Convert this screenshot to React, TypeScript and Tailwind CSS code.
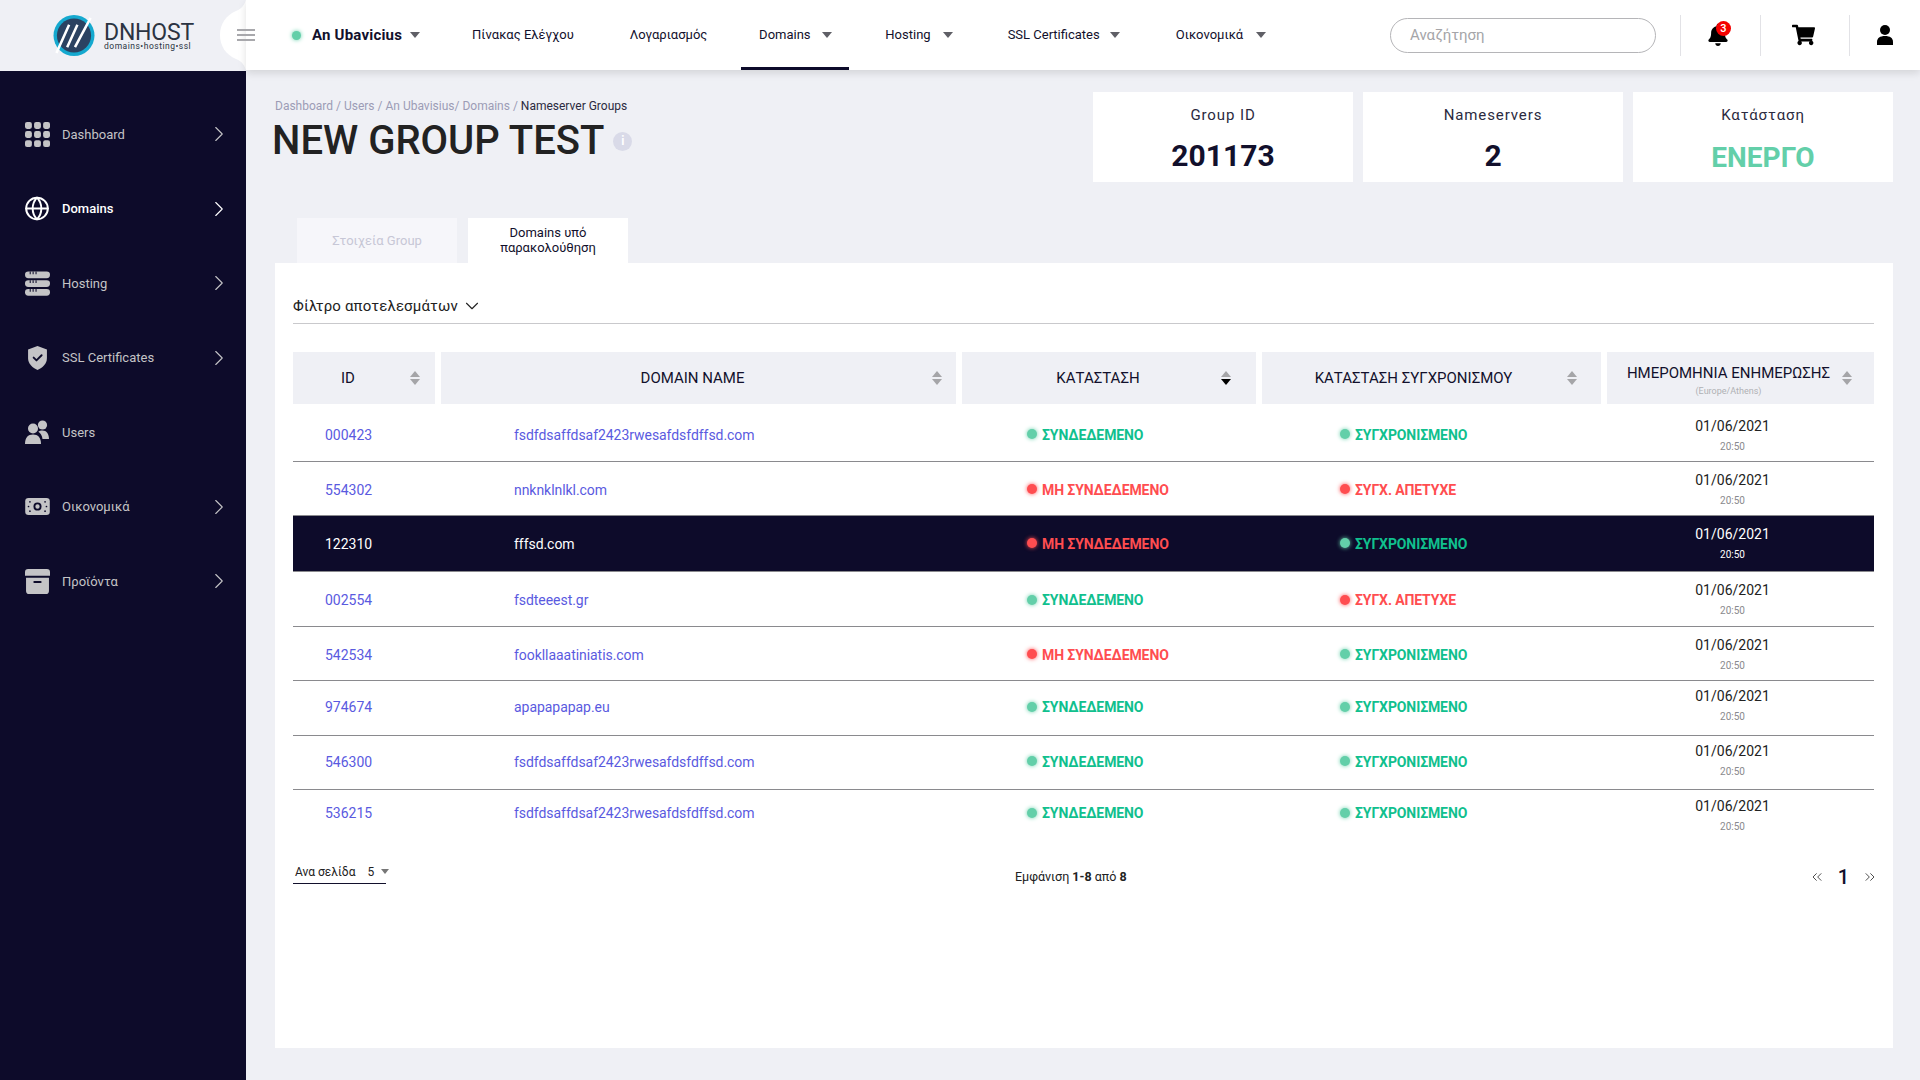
import React from 'react';
import { ChevronRight, ChevronDown, Globe, ChevronsLeft, ChevronsRight } from 'lucide-react';
import { FaBell, FaShoppingCart } from 'react-icons/fa';

const font = { fontFamily: 'Roboto, sans-serif' };

const Caret = ({ className = 'border-x-[5px] border-t-[6px] border-t-[#5f5f66]' }: { className?: string }) => (
  <span className={`inline-block w-0 h-0 shrink-0 border-x-transparent ${className}`} />
);

const Dashboard = () => (
  <svg viewBox="0 0 24 24" className="w-[25px] h-[25px]" fill="#c4c4c6">
    {[0, 8.7, 17.4].flatMap(y => [0, 8.7, 17.4].map(x => <rect key={`${x}-${y}`} x={x} y={y} width="6.6" height="6.6" rx="2" />))}
  </svg>
);

const Server = () => (
  <svg viewBox="0 0 24 24" className="w-[25px] h-[25px]" fill="#c4c4c6">
    {[0.5, 8.9, 17.3].map(y => (
      <g key={y}>
        <rect x="0" y={y} width="24" height="6.4" rx="3.2" />
        <path d={`M5 ${y}v2.600M7.800 ${y}v2.600M10.600 ${y}v2.600`} stroke="#0d0b2a" strokeWidth="1" />
      </g>
    ))}
  </svg>
);

const Shield = () => (
  <svg viewBox="0 0 24 28" className="w-[21px] h-[24px]">
    <path d="M12 0 23 4v10c0 7-5 11-11 14C6 25 1 21 1 14V4z" fill="#c4c4c6" />
    <path d="m7.500 13.500 3.300 3.300 6-6" fill="none" stroke="#0d0b2a" strokeWidth="2.200" strokeLinecap="round" strokeLinejoin="round" />
  </svg>
);

const UsersIcon = () => (
  <svg viewBox="0 0 24 24" className="w-[24px] h-[24px]" fill="#c4c4c6">
    <circle cx="17.500" cy="5" r="4.600" />
    <path d="M24 19h-6.500c-.3-3.300-1.800-5.700-4.200-7.200 1-.9 2.400-1.400 4.200-1.400 3.900 0 6.500 3 6.500 8.600z" />
    <circle cx="8" cy="8.500" r="5" />
    <path d="M0 24c0-6.500 3-9.500 8-9.500s8 3 8 9.500z" />
  </svg>
);

const Money = () => (
  <svg viewBox="0 0 26 18" className="w-[25px] h-[17px]">
    <rect width="26" height="18" rx="3.500" fill="#c4c4c6" />
    <circle cx="13" cy="9" r="3.300" fill="none" stroke="#0d0b2a" strokeWidth="2" />
    <path d="M5 4v.01M5 14v.01M21 4v.01M21 14v.01M3.500 9v.01M22.500 9v.01" stroke="#0d0b2a" strokeWidth="1.800" strokeLinecap="round" />
  </svg>
);

const Archive = () => (
  <svg viewBox="0 0 24 24" className="w-[25px] h-[25px]" fill="#c4c4c6">
    <path d="M3 0h18a3 3 0 0 1 3 3v3.500H0V3a3 3 0 0 1 3-3zM1 8.500h22V21a3 3 0 0 1-3 3H4a3 3 0 0 1-3-3z" />
    <rect x="8" y="11.500" width="8" height="2" rx="1" fill="#0d0b2a" />
  </svg>
);

const sideItems = [
  { label: 'Dashboard', icon: <Dashboard />, arrow: true },
  { label: 'Domains', icon: <Globe className="w-[27px] h-[27px] text-white" strokeWidth={1.800} />, arrow: true, active: true },
  { label: 'Hosting', icon: <Server />, arrow: true },
  { label: 'SSL Certificates', icon: <Shield />, arrow: true },
  { label: 'Users', icon: <UsersIcon />, arrow: false },
  { label: 'Οικονομικά', icon: <Money />, arrow: true },
  { label: 'Προϊόντα', icon: <Archive />, arrow: true },
];

const navItems = [
  { label: 'Domains', box: 'w-[108px] justify-center gap-[11px]', active: true },
  { label: 'Hosting', box: 'ml-[36px] gap-[12px]' },
  { label: 'SSL Certificates', box: 'ml-[55px] gap-[10px]' },
  { label: 'Οικονομικά', box: 'ml-[56px] gap-[13px]' },
];

type Status = 'ok' | 'bad';

// row heights and small offsets follow the uneven spacing of the table
const rows: { id: string; domain: string; st: Status; sync: Status; h: string; nudge: string; date: string; dark?: boolean }[] = [
  { id: '000423', domain: 'fsdfdsaffdsaf2423rwesafdsfdffsd.com', st: 'ok', sync: 'ok', h: 'h-[58px]', nudge: 'pt-[5px]', date: 'mt-0' },
  { id: '554302', domain: 'nnknklnlkl.com', st: 'bad', sync: 'bad', h: 'h-[54px]', nudge: 'pt-[3px]', date: '-mt-[2px]' },
  { id: '122310', domain: 'fffsd.com', st: 'bad', sync: 'ok', h: 'h-[56px]', nudge: 'pt-[1px]', date: '-mt-[2px]', dark: true },
  { id: '002554', domain: 'fsdteeest.gr', st: 'ok', sync: 'bad', h: 'h-[55px]', nudge: 'pt-[3px]', date: '-mt-[2px]' },
  { id: '542534', domain: 'fookllaaatiniatis.com', st: 'bad', sync: 'ok', h: 'h-[54px]', nudge: 'pt-[3px]', date: '-mt-[2px]' },
  { id: '974674', domain: 'apapapapap.eu', st: 'ok', sync: 'ok', h: 'h-[55px]', nudge: 'pb-[1px]', date: '-mt-[4px]' },
  { id: '546300', domain: 'fsdfdsaffdsaf2423rwesafdsfdffsd.com', st: 'ok', sync: 'ok', h: 'h-[54px]', nudge: 'pb-[1px]', date: '-mt-[4px]' },
  { id: '536215', domain: 'fsdfdsaffdsaf2423rwesafdsfdffsd.com', st: 'ok', sync: 'ok', h: 'h-[53px]', nudge: 'pb-[6px]', date: 'mt-[3px]' },
];

const SortArrows = ({ active }: { active?: boolean }) => (
  <span className="flex flex-col gap-[2px]">
    <span className="w-0 h-0 border-x-[5px] border-x-transparent border-b-[6px] border-b-[#a5a5a8]" />
    <span className={`w-0 h-0 border-x-[5px] border-x-transparent border-t-[6px] ${active ? 'border-t-black' : 'border-t-[#a5a5a8]'}`} />
  </span>
);

const HeadCell = ({ label, sub, arrowRight, offset, active }: { label: string; sub?: string; arrowRight: string; offset: string; active?: boolean }) => (
  <div className={`relative bg-[#eff0f5] h-[52px] flex flex-col items-center justify-center text-[#12102c] ${sub ? 'pt-[4px]' : ''}`}>
    <span className={`text-[15px] leading-[18px] ${offset}`}>{label}</span>
    {sub && <span className="text-[9px] leading-[10px] text-[#b0b0b4] mt-[4px] pr-[24px]">{sub}</span>}
    <span className={`absolute top-[19px] ${arrowRight}`}><SortArrows active={active} /></span>
  </div>
);

const StatusCell = ({ kind, okText, badText, pad }: { kind: Status; okText: string; badText: string; pad: string }) => (
  <div className={`flex items-center gap-[5px] ${pad}`}>
    <span className={`w-[10px] h-[10px] -mt-[2px] rounded-full ${kind === 'ok' ? 'bg-[#63cfa9] shadow-[0_0_4px_#63cfa9]' : 'bg-[#ff4d50] shadow-[0_0_4px_#ff4d50]'}`} />
    <span className={`text-[14px] font-bold tracking-[-0.1px] ${kind === 'ok' ? 'text-[#10c08e]' : 'text-[#ff4d50]'}`}>
      {kind === 'ok' ? okText : badText}
    </span>
  </div>
);

const Stat = ({ label, value, green }: { label: string; value: string; green?: boolean }) => (
  <div className="w-[260px] h-[90px] bg-white flex flex-col items-center">
    <span className="mt-[13px] text-[15px] leading-[20px] tracking-[0.900px] text-[#2b2a40]">{label}</span>
    <span className={`leading-[38px] font-bold ${green ? 'mt-[14px] text-[28px] text-[#63cfa9]' : 'mt-[12px] text-[30px] text-[#12102c]'}`}>{value}</span>
  </div>
);

export default function App() {
  return (
    <div className="h-[1080px] w-[1920px] overflow-hidden bg-[#eff0f5] flex flex-col" style={font}>
      {/* Top bar */}
      <header className="relative z-10 h-[71px] flex shrink-0">
        <div className="relative w-[246px] shrink-0 bg-[#eff0f5] flex items-start pl-[53px] pt-[15px] gap-[9px]">
          <svg viewBox="0 0 42 42" className="w-[42px] h-[41px] shrink-0">
            <circle cx="21" cy="21" r="21" fill="#15a9cf" />
            <circle cx="21" cy="21" r="17.500" fill="#2b4261" />
            <path d="M3 39 16 10M14 33 24.500 10M22 33 38 3" stroke="#fff" strokeWidth="2.600" fill="none" />
          </svg>
          <div className="flex flex-col text-[#2b3442] w-[90px]">
            <span className="text-[23px] leading-[18px] mt-[9px] tracking-[-0.2px]">DNHOST</span>
            <span className="text-[8.500px] leading-[8px] tracking-[0.500px] whitespace-nowrap">domains•hosting•ssl</span>
          </div>
          <svg viewBox="0 0 26 70" className="absolute right-0 top-0 w-[26px] h-[70px]">
            <path d="M26 0v70c-2-6-5-9-10-11C6 55 0 46 0 35 0 24 6 15 16 11 21 9 24 6 26 0z" fill="#fff" />
          </svg>
        </div>
        <div className="relative flex-1 h-[70px] bg-white shadow-[0_3px_8px_rgba(0,0,0,0.12)] flex items-center">
          <div className="flex flex-col gap-[3px] w-[18px] shrink-0 -ml-[9px] mr-[37px]">
            <span className="h-[2px] bg-[#a8a8ac]" />
            <span className="h-[2px] bg-[#a8a8ac]" />
            <span className="h-[2px] bg-[#a8a8ac]" />
          </div>
          <span className="w-[9px] h-[9px] rounded-full bg-[#63cfa9] shadow-[0_0_4px_#63cfa9] mr-[11px]" />
          <span className="text-[15px] font-bold text-[#12102c] tracking-[0.200px] mr-[8px]">An Ubavicius</span>
          <Caret />
          <span className="text-[13px] text-[#12102c] ml-[52px]">Πίνακας Ελέγχου</span>
          <span className="text-[13px] text-[#12102c] ml-[56px] mr-[34px]">Λογαριασμός</span>
          {navItems.map(n => (
            <div key={n.label} className={`relative h-[70px] flex items-center ${n.box}`}>
              <span className="text-[13px] text-[#12102c] -mt-[1px] whitespace-nowrap">{n.label}</span>
              <Caret />
              {n.active && <span className="absolute bottom-0 inset-x-0 h-[3px] bg-[#0d0b2a]" />}
            </div>
          ))}
          <div className="ml-auto flex items-center">
            <div className="w-[266px] h-[35px] rounded-full border border-[#b5b5b8] flex items-center pl-[19px] text-[15px] text-[#a5a5a8] mr-[24px]">Αναζήτηση</div>
            <div className="h-[41px] w-[80px] border-l border-[#e2e2e6] relative flex items-center justify-center">
              <FaBell className="w-[20px] h-[22px] text-black -ml-[6px]" />
              <span className="absolute left-[35px] top-[6px] w-[15px] h-[15px] rounded-full bg-[#f40000] text-white text-[11px] leading-[15px] text-center font-medium">3</span>
            </div>
            <div className="h-[41px] w-[89px] border-l border-[#e2e2e6] flex items-center justify-center">
              <FaShoppingCart className="w-[23px] h-[22px] text-black -ml-[4px]" />
            </div>
            <div className="h-[41px] w-[71px] border-l border-[#e2e2e6] flex items-center">
              <svg viewBox="0 0 16 20" className="w-[16px] h-[20px] ml-[27px]" fill="#000">
                <circle cx="8" cy="5" r="5" />
                <path d="M0 20v-3c0-4 3-6 8-6s8 2 8 6v3z" />
              </svg>
            </div>
          </div>
        </div>
      </header>

      <div className="flex flex-1 min-h-0">
        {/* Sidebar */}
        <aside className="w-[246px] shrink-0 bg-[#0d0b2a] pt-[26px]">
          {sideItems.map(item => (
            <div key={item.label} className="h-[74.500px] flex items-center pl-[24px] pr-[14px]">
              <span className="w-[26px] flex justify-center shrink-0">{item.icon}</span>
              <span className={`ml-[12px] text-[13px] ${item.active ? 'text-white font-medium' : 'text-[#c4c4c6]'}`}>{item.label}</span>
              {item.arrow && <ChevronRight className={`ml-auto w-[26px] h-[26px] ${item.active ? 'text-white' : 'text-[#c4c4c6]'}`} strokeWidth={1} />}
            </div>
          ))}
        </aside>

        {/* Main */}
        <main className="flex-1 pl-[29px] pr-[27px] pt-[21px] min-w-0">
          <div className="flex justify-between h-[126px]">
            <div className="pt-[6px]">
              <div className="text-[12px] leading-[16px] text-[#9c9cb5]">
                Dashboard / Users / An Ubavisius/ Domains / <span className="text-[#2b2a40]">Nameserver Groups</span>
              </div>
              <div className="flex items-center mt-[4px]">
                <h1 className="text-[40px] leading-[46px] font-medium text-[#222] -ml-[3px]">NEW GROUP TEST</h1>
                <span className="ml-[9px] w-[19px] h-[19px] rounded-full bg-[#d9dae8] text-white text-[12px] leading-[19px] text-center font-bold">i</span>
              </div>
            </div>
            <div className="flex gap-[10px]">
              <Stat label="Group ID" value="201173" />
              <Stat label="Nameservers" value="2" />
              <Stat label="Κατάσταση" value="ΕΝΕΡΓΟ" green />
            </div>
          </div>

          {/* Tabs */}
          <div className="flex gap-[11px] pl-[22px]">
            <div className="w-[160px] h-[45px] bg-[#f6f6fa] flex items-center justify-center text-[13px] text-[#c7c7d6]">Στοιχεία Group</div>
            <div className="w-[160px] h-[45px] bg-white flex items-center justify-center text-center text-[13px] leading-[15px] text-[#12102c] pb-[2px]">Domains υπό<br />παρακολούθηση</div>
          </div>

          {/* Panel */}
          <section className="bg-white h-[785px] pl-[18px] pr-[19px]">
            <div className="h-[61px] border-b border-[#c9c9cc] flex items-center gap-[3px] pt-[30px] pb-[4px] text-[15px] text-[#222] tracking-[0.150px]">
              Φίλτρο αποτελεσμάτων
              <ChevronDown className="w-[22px] h-[22px] text-[#222]" strokeWidth={1.200} />
            </div>

            <div className="mt-[28px] grid grid-cols-[142px_515px_294px_339px_267px] gap-x-[6px]">
              <HeadCell label="ID" offset="pr-[32px]" arrowRight="right-[15px]" />
              <HeadCell label="DOMAIN NAME" offset="pr-[12px]" arrowRight="right-[14px]" />
              <HeadCell label="ΚΑΤΑΣΤΑΣΗ" offset="pr-[22px]" arrowRight="right-[25px]" active />
              <HeadCell label="ΚΑΤΑΣΤΑΣΗ ΣΥΓΧΡΟΝΙΣΜΟΥ" offset="pr-[36px]" arrowRight="right-[24px]" />
              <HeadCell label="ΗΜΕΡΟΜΗΝΙΑ ΕΝΗΜΕΡΩΣΗΣ" sub="(Europe/Athens)" offset="pr-[24px]" arrowRight="right-[22px]" />
            </div>

            {rows.map((r, i) => (
              <div
                key={i}
                className={`grid grid-cols-[148px_521px_300px_345px_267px] items-center ${r.h} ${r.nudge} ${i < rows.length - 1 ? 'border-b border-[#8a8a8e]' : ''} ${r.dark ? 'bg-[#0d0b2a]' : ''}`}
              >
                <span className={`pl-[32px] text-[14px] ${r.dark ? 'text-white' : 'text-[#5a5adf]'}`}>{r.id}</span>
                <span className={`pl-[73px] text-[14px] tracking-[-0.05px] ${r.dark ? 'text-white' : 'text-[#5a5adf]'}`}>{r.domain}</span>
                <StatusCell kind={r.st} okText="ΣΥΝΔΕΔΕΜΕΝΟ" badText="ΜΗ ΣΥΝΔΕΔΕΜΕΝΟ" pad="pl-[65px]" />
                <StatusCell kind={r.sync} okText="ΣΥΓΧΡΟΝΙΣΜΕΝΟ" badText="ΣΥΓΧ. ΑΠΕΤΥΧΕ" pad="pl-[78px]" />
                <div className={`flex flex-col items-center pr-[16px] ${r.date}`}>
                  <span className={`text-[14px] leading-[18px] ${r.dark ? 'text-white' : 'text-[#222]'}`}>01/06/2021</span>
                  <span className={`text-[10px] leading-[14px] mt-[5px] ${r.dark ? 'text-white' : 'text-[#8a8a8e]'}`}>20:50</span>
                </div>
              </div>
            ))}

            {/* Footer */}
            <div className="flex items-start justify-between mt-[17px] relative">
              <div className="w-[93px] h-[24px] border-b border-[#12102c] flex items-center text-[12px] text-[#222] whitespace-nowrap">
                <span className="ml-[2px]">Ανα σελίδα</span>
                <span className="ml-[12px] mr-[7px]">5</span>
                <Caret className="border-x-[4px] border-t-[5px] border-t-[#777]" />
              </div>
              <div className="absolute left-[722px] top-[8px] text-[12.500px] leading-[18px] text-[#222]">
                Εμφάνιση <b>1-8</b> από <b>8</b>
              </div>
              <div className="flex items-center mt-[8px] -mr-[4px] text-[#12102c]">
                <ChevronsLeft className="w-[16px] h-[16px] text-[#333]" strokeWidth={1.300} />
                <span className="mx-[13px] text-[20px] leading-[18px] font-medium">1</span>
                <ChevronsRight className="w-[16px] h-[16px] text-[#333]" strokeWidth={1.300} />
              </div>
            </div>
          </section>
        </main>
      </div>
    </div>
  );
}
